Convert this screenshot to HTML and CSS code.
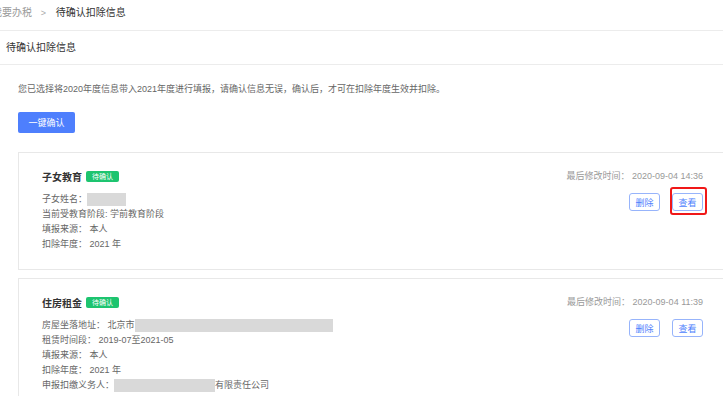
FILE: index.html
```html
<!DOCTYPE html>
<html lang="zh-CN">
<head>
    <meta charset="UTF-8">
    <meta name="viewport" content="width=device-width, initial-scale=1.0">
    <title>待确认扣除信息</title>
    <link rel="stylesheet" href="styles.css">
</head>
<body>
    <div class="breadcrumb">
        <span class="crumb-link">我要办税</span>
        <span class="crumb-sep">&gt;</span>
        <span class="crumb-current">待确认扣除信息</span>
    </div>

    <div class="page-header">待确认扣除信息</div>

    <div class="content">
        <p class="notice">您已选择将2020年度信息带入2021年度进行填报，请确认信息无误，确认后，才可在扣除年度生效并扣除。</p>

        <button class="confirm-btn">一键确认</button>

        <div class="card">
            <div class="card-left">
                <div class="card-title">
                    <span class="title-text">子女教育</span>
                    <span class="tag">待确认</span>
                </div>
                <div class="fields">
                    <div class="field">子女姓名：<span class="mask mask-name"></span></div>
                    <div class="field">当前受教育阶段: 学前教育阶段</div>
                    <div class="field">填报来源： 本人</div>
                    <div class="field">扣除年度： 2021 年</div>
                </div>
            </div>
            <div class="card-right">
                <div class="modified">最后修改时间： 2020-09-04 14:36</div>
                <div class="actions">
                    <button class="action-btn">删除</button>
                    <span class="highlight-wrap">
                        <button class="action-btn">查看</button>
                        <span class="highlight"></span>
                    </span>
                </div>
            </div>
        </div>

        <div class="card">
            <div class="card-left">
                <div class="card-title">
                    <span class="title-text">住房租金</span>
                    <span class="tag">待确认</span>
                </div>
                <div class="fields">
                    <div class="field">房屋坐落地址： 北京市<span class="mask mask-address"></span></div>
                    <div class="field">租赁时间段： 2019-07至2021-05</div>
                    <div class="field">填报来源： 本人</div>
                    <div class="field">扣除年度： 2021 年</div>
                    <div class="field">申报扣缴义务人：<span class="mask mask-company"></span>有限责任公司</div>
                </div>
            </div>
            <div class="card-right">
                <div class="modified">最后修改时间： 2020-09-04 11:39</div>
                <div class="actions">
                    <button class="action-btn">删除</button>
                    <button class="action-btn">查看</button>
                </div>
            </div>
        </div>
    </div>
</body>
</html>
```

FILE: styles.css
```css
* {
    margin: 0;
    padding: 0;
    box-sizing: border-box;
}

html, body {
    overflow: hidden;
}

body {
    font-family: 'Liberation Sans', 'Noto Sans CJK SC', sans-serif;
    background: #fff;
    color: #333;
    width: 723px;
}

.breadcrumb {
    height: 31px;
    line-height: 26px;
    font-size: 10px;
    border-bottom: 1px solid #ececec;
    margin-left: -8px;
    white-space: nowrap;
}

.crumb-link {
    color: #999;
}

.crumb-sep {
    color: #aaa;
    margin: 0 7px 0 6px;
    font-size: 9px;
}

.crumb-current {
    color: #333;
}

.page-header {
    height: 34px;
    line-height: 34px;
    font-size: 10px;
    padding-left: 6px;
    color: #333;
    border-bottom: 1px solid #ececec;
}

.content {
    padding-left: 18px;
}

.notice {
    margin-top: 17px;
    font-size: 9px;
    line-height: 14px;
    color: #666;
    white-space: nowrap;
}

.confirm-btn {
    display: block;
    margin-top: 16px;
    width: 57px;
    height: 21px;
    border: none;
    border-radius: 2px;
    background: #4e7ffd;
    color: #fff;
    font-family: inherit;
    font-size: 9px;
}

.card {
    display: flex;
    justify-content: space-between;
    margin-top: 19px;
    margin-right: -2px;
    border: 1px solid #e8e8e8;
    padding: 15px 21px 17px 23px;
}

.card + .card {
    margin-top: 8px;
}

.card-title {
    display: flex;
    align-items: center;
    height: 16px;
}

.title-text {
    font-size: 10px;
    font-weight: bold;
    color: #333;
}

.tag {
    margin-left: 4px;
    width: 33px;
    height: 11px;
    line-height: 11px;
    text-align: center;
    font-size: 7px;
    color: #fff;
    background: #1dc46f;
    border-radius: 2px;
}

.fields {
    margin-top: 8px;
}

.field {
    font-size: 9px;
    line-height: 15px;
    color: #666;
    white-space: nowrap;
}

.mask {
    display: inline-block;
    height: 13px;
    vertical-align: middle;
    background: #d9d9d9;
}

.mask-name {
    width: 39px;
}

.mask-address {
    width: 198px;
}

.mask-company {
    width: 101px;
}

.card-right {
    display: flex;
    flex-direction: column;
    align-items: flex-end;
}

.modified {
    height: 16px;
    line-height: 16px;
    font-size: 9px;
    color: #999;
    white-space: nowrap;
}

.actions {
    display: flex;
    gap: 12px;
    margin-top: 9px;
}

.action-btn {
    width: 31px;
    height: 18px;
    border: 1px solid #97b4fb;
    border-radius: 3px;
    background: #fff;
    color: #4e7ffd;
    font-family: inherit;
    font-size: 9px;
}

.highlight-wrap {
    position: relative;
    display: flex;
}

.highlight {
    position: absolute;
    left: -2px;
    top: -6px;
    width: 37px;
    height: 28px;
    border: 2px solid #f01818;
    border-radius: 3px;
}
```
